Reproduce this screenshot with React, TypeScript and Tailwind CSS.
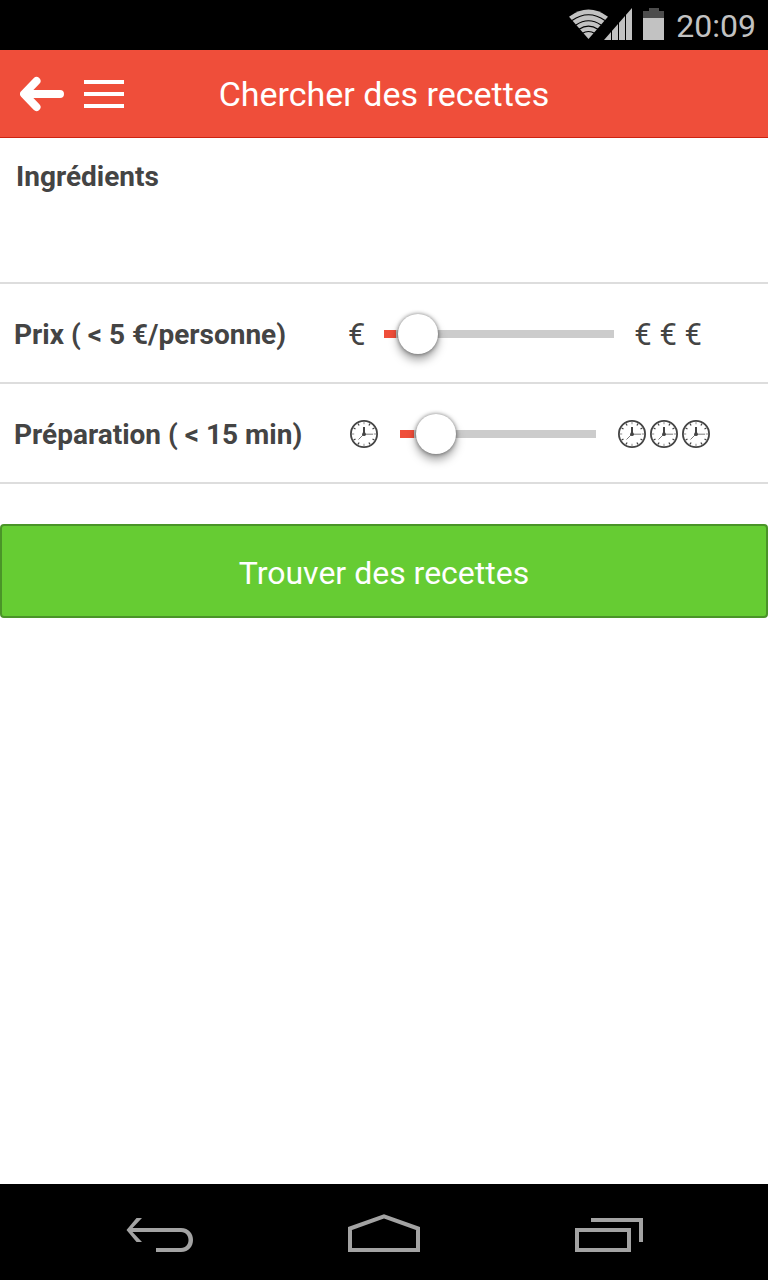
import { useState } from 'react';
import type { CSSProperties, ReactNode } from 'react';

function Clock() {
  return (
    <svg viewBox="0 0 28 28" className="mx-0.5 size-7 shrink-0" fill="none" stroke="#444" aria-hidden="true">
      <circle cx="14" cy="14" r="13.1" strokeWidth="1.8" />
      {[0, 30, 60, 90, 120, 150, 180, 210, 240, 270, 300, 330].map((a) => (
        <path key={a} d="M14 2v2.2" strokeWidth="1.2" opacity={a % 90 === 0 ? 0.5 : 1} transform={`rotate(${a} 14 14)`} />
      ))}
      <path d="M14 7v7" strokeWidth="2" />
      <path d="M14 14.2h9" strokeWidth="0.9" opacity="0.8" />
      <path d="M14 14l-5.5 5.5" strokeWidth="0.7" />
      <circle cx="14" cy="14.2" r="1.9" fill="#444" stroke="none" />
    </svg>
  );
}

function WifiIcon() {
  return (
    <svg viewBox="0 0 40 32" className="h-8 w-10" aria-hidden="true">
      <path d="M1 8.7Q20.5 -5.5 40 8.7L20.5 31Z" fill="#c2c2c2" />
      <g fill="none" stroke="#000" strokeWidth="1.2">
        <path d="M4 12.5Q20.5 1 37 12.5" />
        <path d="M8 17Q20.5 8.5 33 17" />
        <path d="M11 21.3Q20.5 15 30 21.3" />
        <path d="M14 25.4Q20.5 21.6 27 25.4" />
      </g>
    </svg>
  );
}

interface RangeRowProps {
  id: string;
  label: (value: number) => string;
  min: number;
  max: number;
  initial: number;
  low: ReactNode;
  high: ReactNode;
}

function RangeRow({ id, label, min, max, initial, low, high }: RangeRowProps) {
  const [value, setValue] = useState(initial);
  const ratio = (value - min) / (max - min);
  const style = { '--fill': `calc((100% - 40px) * ${ratio} - 2px)` } as CSSProperties;
  return (
    <div className="flex h-[100px] items-center border-b-2 border-[#ddd] pt-0.5 pr-14 pl-3.5">
      <label htmlFor={id} className="w-[334px] shrink-0 pt-0.5 text-[28px] leading-9 font-bold whitespace-nowrap">
        {label(value)}
      </label>
      <div className="flex min-w-0 flex-1 items-center gap-5">
        {low}
        <input
          id={id}
          type="range"
          min={min}
          max={max}
          value={value}
          onChange={(e) => setValue(Number(e.target.value))}
          style={style}
          className="h-10 min-w-0 flex-1 cursor-pointer appearance-none bg-transparent outline-none [&::-webkit-slider-runnable-track]:h-2 [&::-webkit-slider-runnable-track]:bg-[linear-gradient(to_right,#ef4e3a_var(--fill),#ccc_var(--fill))] [&::-webkit-slider-thumb]:-mt-4 [&::-webkit-slider-thumb]:size-10 [&::-webkit-slider-thumb]:appearance-none [&::-webkit-slider-thumb]:rounded-full [&::-webkit-slider-thumb]:bg-white [&::-webkit-slider-thumb]:shadow-[0_0_4px_rgba(0,0,0,0.5),0_6px_10px_rgba(0,0,0,0.35)]"
        />
        {high}
      </div>
    </div>
  );
}

export default function App() {
  return (
    <div className="flex min-h-screen flex-col bg-white font-['Roboto','Liberation_Sans',sans-serif] text-[#444]">
      <div className="flex h-[50px] items-center justify-end bg-black pr-3 pb-0.5 text-[#c2c2c2]">
        <WifiIcon />
        <svg viewBox="0 0 28 32" className="-ml-1 h-8 w-7" fill="#c2c2c2" aria-hidden="true">
          <path d="M28 0V32H0Z" />
          <path d="M7.5 20v12M14.5 12v20M21.5 6v26" stroke="#000" strokeWidth="1" />
        </svg>
        <svg viewBox="0 0 22 32" className="ml-[11px] h-8 w-[22px]" aria-hidden="true">
          <path d="M6 0h10v3h5v7H0V3h6Z" fill="#4d4d4d" />
          <path d="M0 10h21v22H0Z" fill="#c2c2c2" />
        </svg>
        <time className="ml-[11px] pt-1 text-[32px] leading-[44px]">20:09</time>
      </div>

      <header className="grid h-[88px] grid-cols-[1fr_auto_1fr] items-center border-b border-[#cc2311] bg-[#ef4e3a] text-white">
        <div className="flex items-center gap-5 pl-5">
          <button type="button" aria-label="Retour">
            <svg viewBox="0 0 44 36" className="h-9 w-11" fill="none" stroke="#fff" strokeWidth="8" strokeLinecap="round" strokeLinejoin="round">
              <path d="M16.5 5L4 18L16.5 31M6 18H40" />
            </svg>
          </button>
          <button type="button" aria-label="Menu" className="flex w-10 flex-col gap-2">
            <span className="h-1 bg-white" />
            <span className="h-1 bg-white" />
            <span className="h-1 bg-white" />
          </button>
        </div>
        <h1 className="text-[34px] leading-[44px] font-normal">Chercher des recettes</h1>
      </header>

      <main className="flex-1">
        <div className="flex h-[146px] flex-col border-b-2 border-[#ddd] px-4 pt-[21px]">
          <label htmlFor="ingredients" className="text-[28px] leading-9 font-bold">
            Ingrédients
          </label>
          <input id="ingredients" type="text" className="w-full flex-1 bg-transparent text-[28px] outline-none" />
        </div>
        <RangeRow
          id="prix"
          label={(v) => `Prix ( < ${v} €/personne)`}
          min={1}
          max={55}
          initial={5}
          low={<span className="w-4 pt-0.5 text-[31px] leading-9">€</span>}
          high={<span className="pt-0.5 pr-2.5 text-[31px] leading-9 whitespace-nowrap">€ € €</span>}
        />
        <RangeRow
          id="preparation"
          label={(v) => `Préparation ( < ${v} min)`}
          min={10}
          max={60}
          initial={15}
          low={<Clock />}
          high={
            <span className="flex">
              <Clock />
              <Clock />
              <Clock />
            </span>
          }
        />
        <button
          type="button"
          className="mt-10 block h-[94px] w-full rounded-[4px] border-2 border-[#4a9428] bg-[#66cc33] pt-1 text-[32px] leading-[44px] text-white"
        >
          Trouver des recettes
        </button>
      </main>

      <nav className="flex h-24 items-center justify-around bg-black px-12 pt-2">
        <button type="button" aria-label="Précédent">
          <svg viewBox="0 0 68 40" className="h-10 w-[68px]" fill="#a3a3a3" aria-hidden="true">
            <path d="M11.5 2H17L7.5 12H56C72 12 72 36 56 36H31V32H56C66 32 66 16 56 16H7.5L17 26H11.5L1.5 14Z" />
          </svg>
        </button>
        <button type="button" aria-label="Accueil">
          <svg viewBox="0 0 72 40" className="h-10 w-[72px] overflow-visible" fill="none" stroke="#a3a3a3" strokeWidth="4">
            <path d="M2 34V12.5L36 0.4L70 12.5V34Z" />
          </svg>
        </button>
        <button type="button" aria-label="Applications récentes">
          <svg viewBox="0 0 68 40" className="h-10 w-[68px]" fill="none" stroke="#a3a3a3" strokeWidth="4">
            <path d="M2 14H54V34H2ZM16 4H66V26" />
          </svg>
        </button>
      </nav>
    </div>
  );
}
